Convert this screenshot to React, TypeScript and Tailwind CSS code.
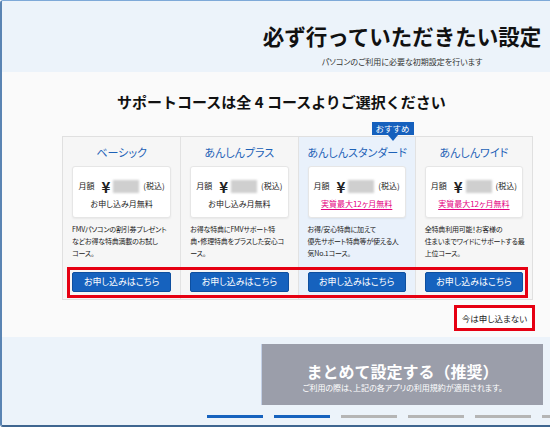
import React from 'react';

type Course = {
  name: string;
  note: string;
  promo?: boolean;
  featured?: boolean;
  lines: string[];
};

const courses: Course[] = [
  {
    name: 'ベーシック',
    note: 'お申し込み月無料',
    lines: ['FMVパソコンの割引券プレゼント', 'などお得な特典満載のお試し', 'コース。'],
  },
  {
    name: 'あんしんプラス',
    note: 'お申し込み月無料',
    lines: ['お得な特典にFMVサポート特', '典・修理特典をプラスした安心コ', 'ース。'],
  },
  {
    name: 'あんしんスタンダード',
    note: '実質最大12ヶ月無料',
    promo: true,
    featured: true,
    lines: ['お得/安心特典に加えて', '優先サポート特典等が使える人', '気No.1コース。'],
  },
  {
    name: 'あんしんワイド',
    note: '実質最大12ヶ月無料',
    promo: true,
    lines: ['全特典利用可能！お客様の', '住まいまでワイドにサポートする最', '上位コース。'],
  },
];

const steps = [true, true, false, false, false, false];

const CourseColumn: React.FC<{ course: Course; first: boolean }> = ({ course, first }) => (
  <div
    className={`relative flex flex-col px-[9px] pb-[7px] ${first ? '' : 'border-l border-[#e2e2e2]'} ${
      course.featured ? 'bg-[#e9f1fb]' : 'bg-[#f6f6f6]'
    }`}
  >
    {course.featured && (
      <div className="absolute left-[73px] top-[-15px] flex flex-col items-center">
        <span className="bg-[#1560bd] px-[4px] text-[8.5px] leading-[13px] text-white">おすすめ</span>
        <span className="h-0 w-0 border-x-[5px] border-t-[6px] border-x-transparent border-t-[#1560bd]" />
      </div>
    )}
    <div className="pt-[7px] text-center text-[11px] leading-[16px] text-[#1d62b7] whitespace-nowrap [font-feature-settings:'palt']">
      {course.name}
    </div>
    <div className="mt-[6px] flex h-[52px] flex-col items-center rounded-[3px] border border-[#e6e6e6] bg-white pt-[11px] shadow-[0_1px_2px_rgba(0,0,0,0.06)]">
      <div className="flex h-[16px] items-center text-[#222]">
        <span className="text-[8px]">月額</span>
        <span className="ml-[7px] text-[15px] font-bold leading-none">¥</span>
        <span className="ml-[3px] h-[13px] w-[26px] bg-[#cfcfcf] blur-[1px]" />
        <span className="ml-[4px] text-[8px]">(税込)</span>
      </div>
      <div
        className={`mt-[4px] text-[8px] leading-[12px] whitespace-nowrap [font-feature-settings:'palt'] ${
          course.promo ? 'text-[#e4007f] underline underline-offset-2' : 'text-[#222]'
        }`}
      >
        {course.note}
      </div>
    </div>
    <div className="mt-[5px] flex-1 text-[7px] leading-[12px] tracking-[-0.2px] text-[#222] [font-feature-settings:'palt']">
      {course.lines.map((l) => (
        <div key={l} className="whitespace-nowrap">
          {l}
        </div>
      ))}
    </div>
    <button className="h-[20px] rounded-[2px] border border-[#0e4f9f] bg-[#1662be] text-[9px] text-white [font-feature-settings:'palt']">
      お申し込みはこちら
    </button>
  </div>
);

export default function App() {
  return (
    <div className="flex h-[427px] w-[550px] flex-col overflow-hidden rounded-tl-[3px] rounded-bl-[3px] border-t border-l-2 border-b-2 border-t-[#7ea9d8] border-l-[#5a84b3] border-b-[#3f6690] font-['Noto_Sans_CJK_JP',sans-serif]">
      {/* header */}
      <div className="flex h-[71px] shrink-0 flex-col items-center bg-[#ecf3fa] pl-[252px]">
        <h1 className="mt-[22px] text-[21.5px] font-bold leading-[26px] text-[#111] whitespace-nowrap">
          必ず行っていただきたい設定
        </h1>
        <p className="mt-[8px] text-[8px] leading-[10px] text-[#333] whitespace-nowrap [font-feature-settings:'palt']">
          パソコンのご利用に必要な初期設定を行います
        </p>
      </div>

      {/* courses */}
      <div className="flex h-[265px] shrink-0 flex-col bg-[#fafafa]">
        <h2 className="ml-[115px] mt-[20px] text-[15px] font-bold leading-[20px] text-[#111] whitespace-nowrap">
          サポートコースは全 4 コースよりご選択ください
        </h2>
        <div className="relative ml-[60px] mt-[24px] grid h-[164px] w-[471px] grid-cols-4 border border-[#e0e0e0]">
          {courses.map((c, i) => (
            <CourseColumn key={c.name} course={c} first={i === 0} />
          ))}
          <div className="pointer-events-none absolute left-[4px] top-[130px] h-[31px] w-[461px] border-[3px] border-[#e60012]" />
        </div>
        <div className="mt-[5px] flex justify-end pr-[15px]">
          <button className="h-[26px] w-[81px] border-[3px] border-[#e60012] bg-white text-[8.5px] text-[#222] [font-feature-settings:'palt']">
            今は申し込まない
          </button>
        </div>
      </div>

      {/* footer */}
      <div className="flex flex-1 flex-col bg-[#ecf3fa]">
        <button className="ml-[259px] mt-[7px] flex h-[61px] w-[282px] flex-col items-center justify-center gap-[2px] border-l border-[#c3d0e6] bg-[#9b9eaa] pt-[6px] text-white">
          <span className="text-[16px] font-bold leading-[18px]">まとめて設定する（推奨）</span>
          <span className="text-[8px] leading-[11px] [font-feature-settings:'palt']">
            ご利用の際は、上記の各アプリの利用規約が適用されます。
          </span>
        </button>
        <div className="ml-[205px] mt-[10px] flex gap-[11px]">
          {steps.map((on, i) => (
            <span key={i} className={`h-[2.5px] w-[56px] shrink-0 ${on ? 'bg-[#1662be]' : 'bg-[#b5b5b5]'}`} />
          ))}
        </div>
      </div>
    </div>
  );
}
